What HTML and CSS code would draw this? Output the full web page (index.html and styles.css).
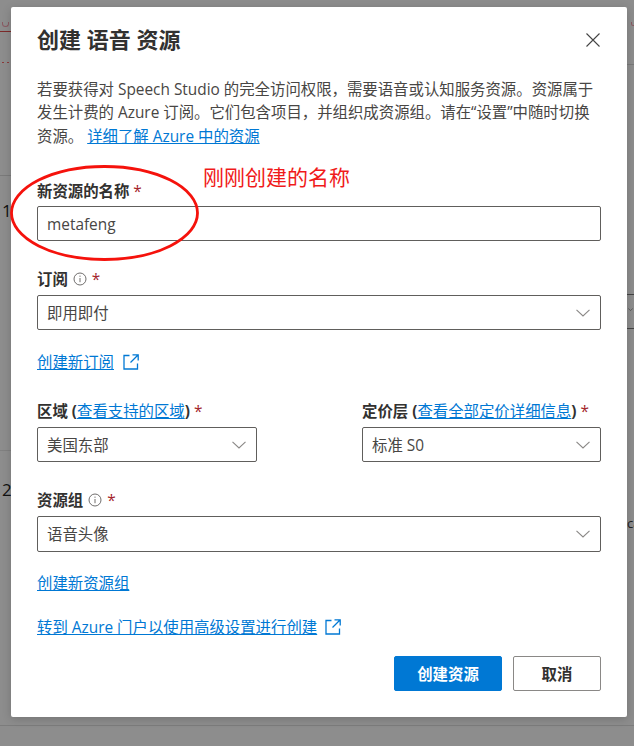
FILE: index.html
```html
<!DOCTYPE html>
<html lang="zh-CN">
<head>
<meta charset="utf-8">
<title>创建 语音 资源</title>
<link rel="stylesheet" href="styles.css">
</head>
<body>
<div class="backdrop">
  <span class="bg-num bg-num-1">1</span>
  <span class="bg-num bg-num-2">2</span>
  <span class="bg-ca">ca</span>
  <span class="bg-line bg-line-a"></span>
  <span class="bg-line bg-line-b"></span>
  <span class="bg-line bg-line-c"></span>
  <span class="bg-line bg-line-d"></span>
  <span class="bg-line bg-line-e"></span>
  <span class="bg-line bg-line-f"></span>
  <span class="bg-cup bg-cup-a"></span>
  <span class="bg-cup bg-cup-b"></span>
  <span class="bg-red bg-red-a"></span>
  <span class="bg-red bg-red-b"></span>
  <svg class="bg-chev" viewBox="0 0 6 4"><path d="M0 .5l3 3 3-3"/></svg>
</div>
<main class="dialog">
  <header class="head">
    <h1 class="title">创建 语音 资源</h1>
    <svg class="close" viewBox="0 0 14 14" aria-label="关闭"><path d="M.5.5l13 13M13.5.5l-13 13"/></svg>
  </header>
  <p class="intro">若要获得对 Speech Studio 的完全访问权限，需要语音或认知服务资源。资源属于发生计费的 Azure 订阅。它们包含项目，并组织成资源组。请在“设置”中随时切换资源。 <a href="#">详细了解 Azure 中的资源</a></p>

  <div class="field field-name">
    <label class="label">新资源的名称 <i class="req">*</i></label>
    <div class="box box-near box-name">metafeng</div>
  </div>

  <div class="field field-sub">
    <label class="label">订阅 <svg class="info" viewBox="0 0 14 14"><circle cx="7" cy="7" r="6"/><path d="M7 6v4.2M7 3.6v1.2"/></svg> <i class="req">*</i></label>
    <div class="box select">即用即付<svg class="chev" viewBox="0 0 14 8"><path d="M.5.8L7 7l6.500-6.200"/></svg></div>
  </div>

  <p class="linkline link-sub"><a href="#">创建新订阅</a><svg class="ext" viewBox="0 0 16 16"><path d="M6.500 1.500H1v13.500h13.500V9.500M9.500.8h5.700v5.700M15 1L7.500 8.500"/></svg></p>

  <div class="cols">
    <div class="field col-region">
      <label class="label">区域 (<a href="#">查看支持的区域</a>) <i class="req">*</i></label>
      <div class="box select">美国东部<svg class="chev" viewBox="0 0 14 8"><path d="M.5.8L7 7l6.500-6.200"/></svg></div>
    </div>
    <div class="field col-tier">
      <label class="label">定价层 (<a href="#">查看全部定价详细信息</a>) <i class="req">*</i></label>
      <div class="box select">标准 S0<svg class="chev" viewBox="0 0 14 8"><path d="M.5.8L7 7l6.500-6.200"/></svg></div>
    </div>
  </div>

  <div class="field field-group">
    <label class="label">资源组 <svg class="info" viewBox="0 0 14 14"><circle cx="7" cy="7" r="6"/><path d="M7 6v4.2M7 3.600v1.200"/></svg> <i class="req">*</i></label>
    <div class="box box-tall select">语音头像<svg class="chev" viewBox="0 0 14 8"><path d="M.5.8L7 7l6.500-6.200"/></svg></div>
  </div>

  <p class="linkline link-group"><a href="#">创建新资源组</a></p>
  <p class="linkline link-portal"><a href="#">转到 Azure 门户以使用高级设置进行创建</a><svg class="ext ext-portal" viewBox="0 0 16 16"><path d="M6.500 1.500H1v13.500h13.500V9.500M9.500.8h5.700v5.700M15 1L7.500 8.500"/></svg></p>

  <footer class="actions">
    <button class="btn primary">创建资源</button>
    <button class="btn">取消</button>
  </footer>

  <svg class="ellipse" viewBox="0 0 190 98"><ellipse cx="95.500" cy="49" rx="93" ry="46.500"/></svg>
  <span class="note">刚刚创建的名称</span>
</main>
</body>
</html>
```
FILE: styles.css
```css
* { box-sizing: border-box; }
html, body { margin: 0; height: 100%; }
body {
  width: 634px;
  height: 746px;
  overflow: hidden;
  position: relative;
  background: #8d8d8d;
  padding: 7px 7px 0 11px;
  font-family: "Open Sans", "Noto Sans CJK SC", sans-serif;
  font-size: 15.4px;
  color: #323130;
}
.backdrop { position: absolute; inset: 0; }
.bg-num { position: absolute; left: 2px; font-size: 17px; line-height: 20px; color: #111; }
.bg-num-1 { top: 201px; }
.bg-num-2 { top: 480px; }
.bg-ca { position: absolute; left: 627px; top: 514px; font-size: 13px; color: #222; }
.bg-line { position: absolute; height: 1px; background: #7a7a7a; }
.bg-line-a { left: 0; top: 175px; width: 11px; }
.bg-line-b { left: 627px; top: 64px; width: 7px; }
.bg-line-c { left: 627px; top: 294px; width: 7px; background: #444; }
.bg-line-d { left: 627px; top: 328px; width: 7px; background: #444; }
.bg-line-e { left: 0; top: 725px; width: 634px; background: #7c7c7c; }
.bg-line-f { left: 0; top: 450px; width: 11px; background: #808080; }
.bg-cup { position: absolute; border: 1px solid #8a5a62; border-top: 0; border-radius: 0 0 4px 4px; }
.bg-cup-a { left: 2px; top: 22px; width: 7px; height: 5px; }
.bg-cup-b { left: 631px; top: 22px; width: 5px; height: 4px; }
.bg-chev { position: absolute; left: 628px; top: 308px; width: 5px; height: 3px; fill: none; stroke: #444; stroke-width: .9; }
.bg-red { position: absolute; height: 1px; background: #7d2a2a; }
.bg-red-a { left: 0; top: 31px; width: 11px; }
.bg-red-b { left: 2px; top: 62px; width: 7px; background: repeating-linear-gradient(90deg, #8c3a3a 0 2px, transparent 2px 5px); }

.dialog {
  position: relative;
  width: 616px;
  height: 710px;
  background: #fff;
  border-radius: 2px;
  padding: 0 26px;
  box-shadow: 0 2px 10px rgba(0, 0, 0, .18);
}
.head { display: flex; justify-content: space-between; align-items: center; height: 67px; padding-bottom: 1px; }
.title { margin: -2px 0 0; font-size: 22px; font-weight: 700; line-height: 30px; color: #323130; }
.close { width: 14px; height: 14px; margin-right: 1px; fill: none; stroke: #444; stroke-width: 1.1; }
.intro { margin: 4px 0 0; line-height: 23.400px; color: #484644; }
a { color: #0078d4; text-decoration: underline; }
.field { display: flex; flex-direction: column; }
.label { display: block; font-weight: 700; line-height: 21px; color: #323130; white-space: nowrap; }
.label a { font-weight: 400; }
.req { font-style: normal; font-weight: 400; color: #a4262c; }
.info { width: 14px; height: 14px; margin: 0 1px; vertical-align: -1px; fill: none; stroke: #605e5c; stroke-width: .9; }
.box {
  height: 35px;
  margin-top: 5px;
  padding: 0 10px 0 9px;
  border: 1px solid #605e5c;
  border-radius: 2px;
  display: flex;
  align-items: center;
  justify-content: space-between;
  color: #484644;
}
.box-near { margin-top: 4px; }
.box-name { padding-top: 2px; }
.box-tall { height: 36px; padding-bottom: 1px; }
.chev { width: 14px; height: 8px; fill: none; stroke: #8a8886; stroke-width: 1.1; }
.field-name { margin-top: 33px; }
.field-sub { margin-top: 28px; }
.linkline { margin: 0; line-height: 21px; display: flex; align-items: center; white-space: nowrap; }
.link-sub { margin-top: 22px; }
.ext { width: 16px; height: 16px; margin-left: 9px; margin-top: -2px; fill: none; stroke: #0078d4; stroke-width: 1.3; }
.ext-portal { margin-left: 8px; }
.cols { display: flex; justify-content: space-between; margin-top: 28px; }
.col-region { width: 220px; }
.col-tier { width: 239px; }
.field-group { margin-top: 28px; }
.link-group { margin-top: 21px; }
.link-portal { margin-top: 23px; }
.actions { display: flex; justify-content: flex-end; gap: 11px; margin-top: 18px; }
.btn {
  height: 35px;
  width: 88px;
  padding: 0;
  border: 1px solid #8a8886;
  border-radius: 2px;
  background: #fff;
  color: #323130;
  font: 700 15.400px "Open Sans", "Noto Sans CJK SC", sans-serif;
}
.primary { width: 108px; border-color: #0078d4; background: #0078d4; color: #fff; }
.ellipse { position: absolute; left: -2px; top: 156.500px; width: 190px; height: 98px; fill: none; stroke: #f5120c; stroke-width: 2.800; }
.note { position: absolute; left: 192px; top: 154px; font-size: 21px; line-height: 32px; color: #f01a1a; white-space: nowrap; }
```
